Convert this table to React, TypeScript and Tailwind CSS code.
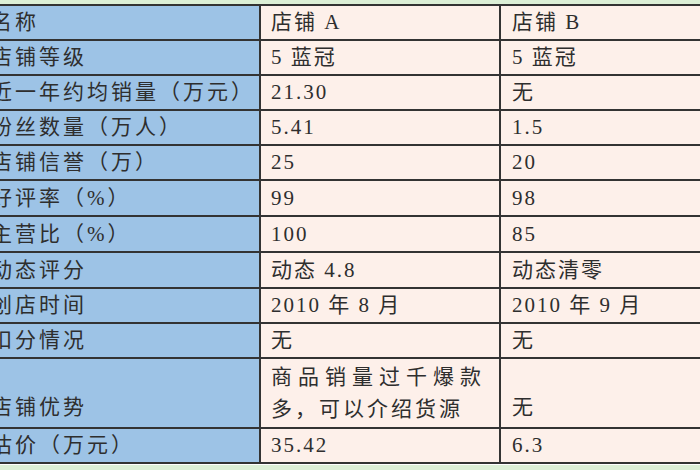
const rows: { name: string; a: string; b: string; h: string }[] = [
  { name: "名称", a: "店铺 A", b: "店铺 B", h: "h-[35px]" },
  { name: "店铺等级", a: "5 蓝冠", b: "5 蓝冠", h: "h-[35px]" },
  { name: "近一年约均销量（万元）", a: "21.30", b: "无", h: "h-[35px]" },
  { name: "粉丝数量（万人）", a: "5.41", b: "1.5", h: "h-[35px]" },
  { name: "店铺信誉（万）", a: "25", b: "20", h: "h-[35px]" },
  { name: "好评率（%）", a: "99", b: "98", h: "h-[36px]" },
  { name: "主营比（%）", a: "100", b: "85", h: "h-[36px]" },
  { name: "动态评分", a: "动态 4.8", b: "动态清零", h: "h-[36px]" },
  { name: "创店时间", a: "2010 年 8 月", b: "2010 年 9 月", h: "h-[35px]" },
  { name: "扣分情况", a: "无", b: "无", h: "h-[35px]" },
];

const font = { fontFamily: '"Liberation Serif", "Noto Sans CJK SC", serif' };

const App = () => {
  return (
    <div
      className="w-[700px] h-[470px] overflow-hidden bg-[#dcefd6] pt-[4px] text-[21px] tracking-[2px] text-[#2e2e2e] leading-none"
      style={font}
    >
      <div className="grid grid-cols-[261px_240px_1fr] border-t-2 border-[#333]">
        {rows.map((row) => (
          <div key={row.name} className="contents">
            <div className={`${row.h} bg-[#9dc3e6] border-b-2 border-r-2 border-[#333] flex items-center overflow-hidden whitespace-nowrap`}>
              <span className="-ml-[9px] tracking-[3px]">{row.name}</span>
            </div>
            <div className={`${row.h} bg-[#fdf0ea] border-b-2 border-r-2 border-[#333] flex items-center pl-[10px] whitespace-nowrap`}>
              {row.a}
            </div>
            <div className={`${row.h} bg-[#fdf0ea] border-b-2 border-[#333] flex items-center pl-[11px] whitespace-nowrap`}>
              {row.b}
            </div>
          </div>
        ))}

        <div className="h-[70px] bg-[#9dc3e6] border-b-2 border-r-2 border-[#333] flex items-end pb-[9px] overflow-hidden whitespace-nowrap">
          <span className="-ml-[9px] tracking-[3px]">店铺优势</span>
        </div>
        <div className="h-[70px] bg-[#fdf0ea] border-b-2 border-r-2 border-[#333] flex flex-col justify-center gap-[11px] pl-[10px] whitespace-nowrap">
          <span className="tracking-[6px]">商品销量过千爆款</span>
          <span className="tracking-[3px]">多，可以介绍货源</span>
        </div>
        <div className="h-[70px] bg-[#fdf0ea] border-b-2 border-[#333] flex items-end pb-[9px] pl-[11px]">
          无
        </div>

        <div className="h-[35px] bg-[#9dc3e6] border-b-2 border-r-2 border-[#333] flex items-center overflow-hidden whitespace-nowrap">
          <span className="-ml-[9px] tracking-[3px]">估价（万元）</span>
        </div>
        <div className="h-[35px] bg-[#fdf0ea] border-b-2 border-r-2 border-[#333] flex items-center pl-[10px]">
          35.42
        </div>
        <div className="h-[35px] bg-[#fdf0ea] border-b-2 border-[#333] flex items-center pl-[11px]">
          6.3
        </div>
      </div>
      <div className="h-px bg-white" />
    </div>
  );
};

export default App;
